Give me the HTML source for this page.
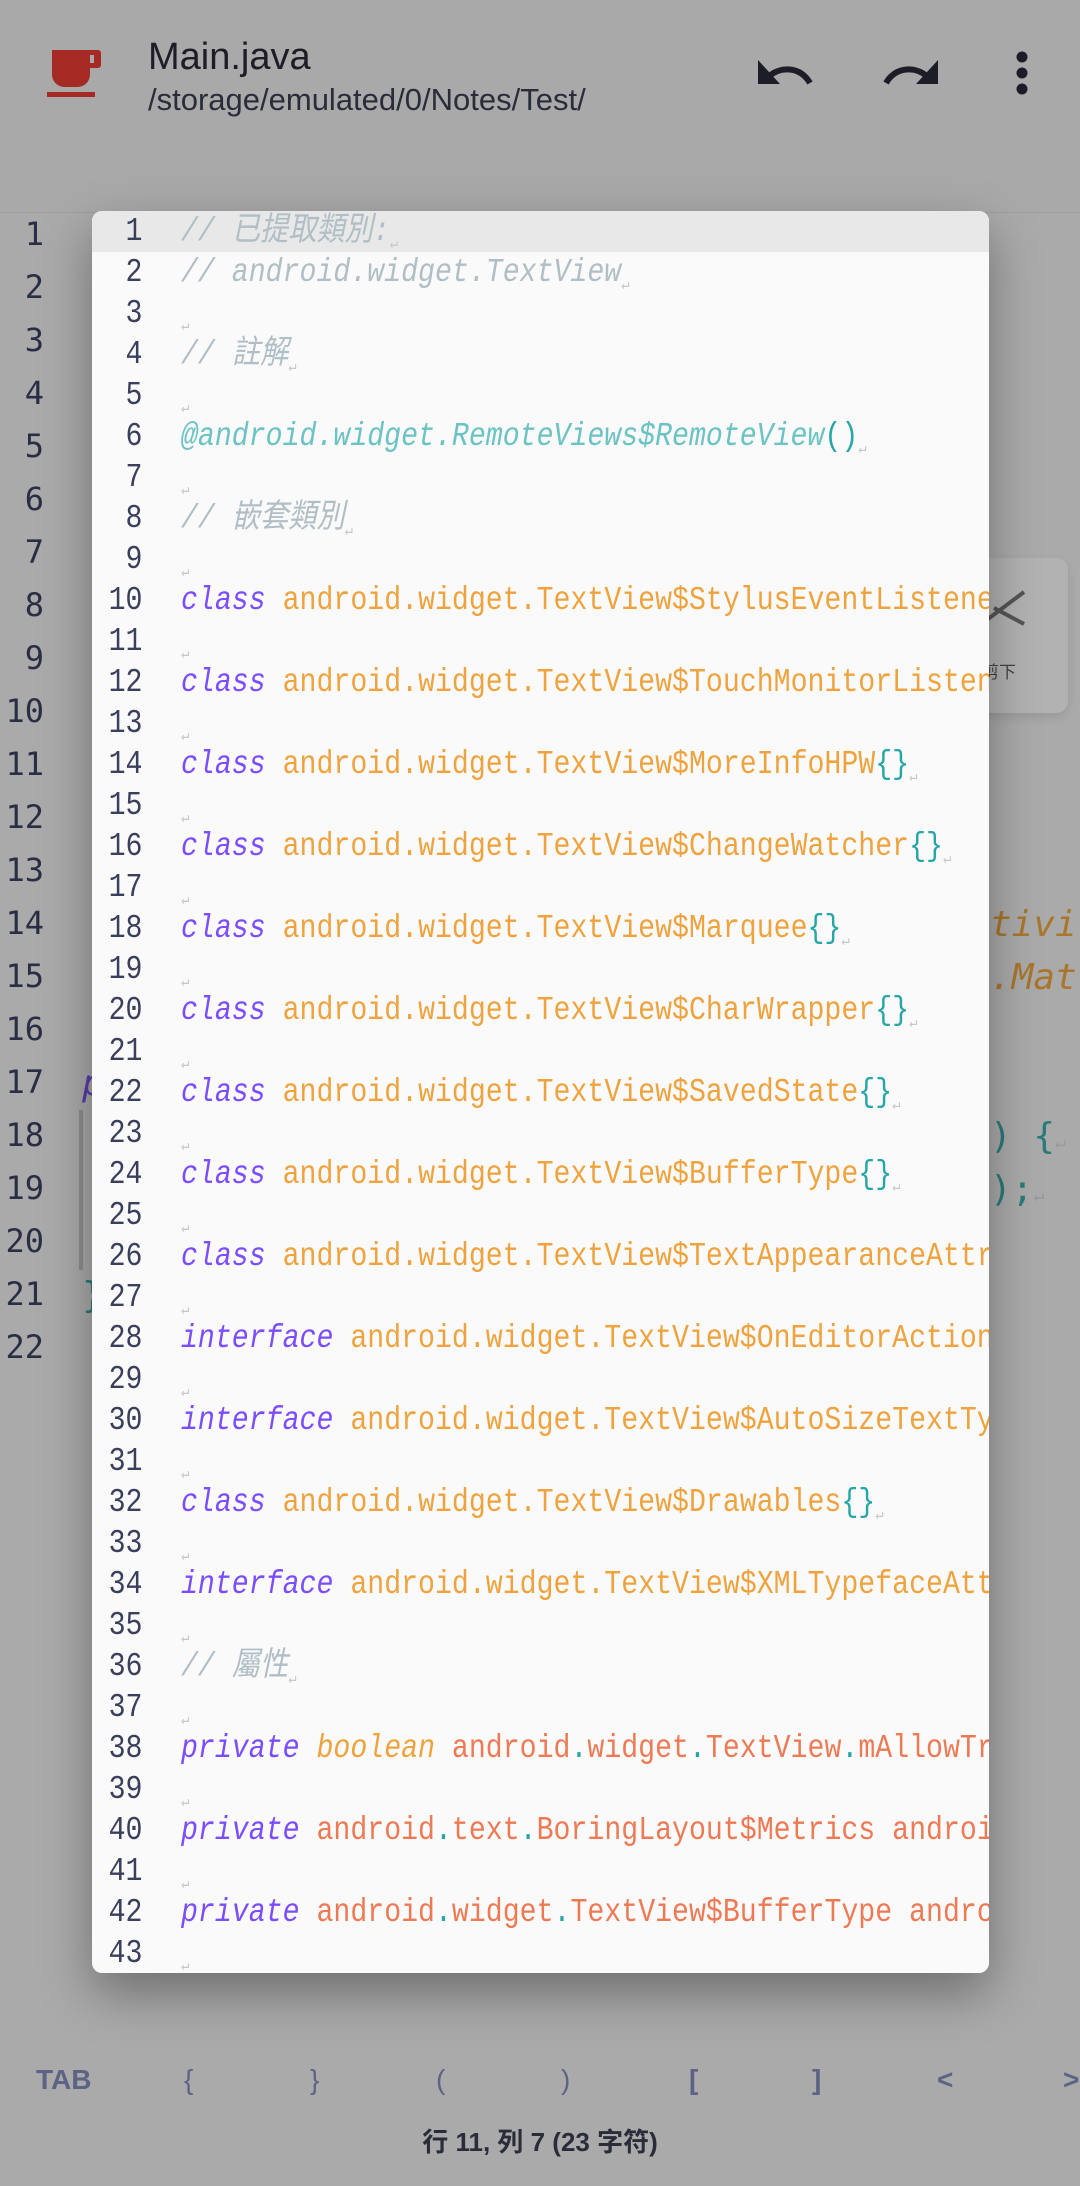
<!DOCTYPE html>
<html><head><meta charset="utf-8">
<style>
*{margin:0;padding:0;box-sizing:border-box}
html,body{width:1080px;height:2186px;overflow:hidden;background:#aaaaaa;font-family:"Liberation Sans","Noto Sans CJK TC",sans-serif}
.top{position:absolute;left:0;top:0;width:1080px;height:213px;background:#a9a9a9;border-bottom:1px solid #9e9e9e}
.title{position:absolute;left:148px;top:36px;font-size:38px;color:#1c1d26}
.sub{position:absolute;left:148px;top:82px;font-size:31px;color:#2a2c3a}
.bgnum{position:absolute;left:0;width:44px;text-align:right;font-family:"DejaVu Sans Mono",monospace;font-size:32px;color:#2a2e45;line-height:53px}
.bgc{position:absolute;font-family:"DejaVu Sans Mono",monospace;font-size:36px;line-height:53px;white-space:nowrap}
.card{position:absolute;left:960px;top:558px;width:108px;height:155px;background:#b2b2b2;border-radius:12px;box-shadow:0 4px 10px rgba(0,0,0,0.1)}
.dlg{position:absolute;left:92px;top:211px;width:897px;height:1762px;background:#fafafa;border-radius:10px;overflow:hidden;box-shadow:0 20px 50px rgba(0,0,0,0.35)}
.ln{position:absolute;left:0;width:897px;height:41px;line-height:41px;white-space:nowrap;font-family:"Liberation Mono","Noto Sans CJK TC",monospace;font-size:33px}
.ln .n{position:absolute;left:0;width:59px;text-align:right;color:#3a3f5c;transform:scaleX(0.855);transform-origin:left center}
.ln .t{position:absolute;left:89px;transform:scaleX(0.855);transform-origin:left center}
.cm{color:#b0bec5;font-style:italic}
.kw{color:#7c4dff;font-style:italic}
.cl{color:#efa33f}
.br{color:#26a6a6}
.an{color:#6cc3c3;font-style:italic}
.fd{color:#ee7a55}
.dt{color:#26a6a6}
.rt{color:#c8c8c8;font-size:16px;font-style:normal;vertical-align:-8px}
.sym{position:absolute;top:2064px;font-size:28px;color:#5d6384;font-weight:bold;font-family:"Liberation Sans",sans-serif}
.stat{position:absolute;top:2122px;left:0;width:1080px;text-align:center;font-size:26px;font-weight:bold;color:#2a2c3a}
</style></head><body>
<div class="top">
<svg style="position:absolute;left:44px;top:48px" width="60" height="52" viewBox="0 0 60 52"><path d="M8 2h38v24c0 8-6 13-13 13h-12c-7 0-13-5-13-13z" fill="#a52a24"/><path d="M44 2h10a3 3 0 0 1 3 3v12a3 3 0 0 1-3 3h-10v-5h6v-8h-6z" fill="#a52a24"/><rect x="3" y="44" width="48" height="5" fill="#a52a24"/></svg>
<div class="title">Main.java</div>
<div class="sub">/storage/emulated/0/Notes/Test/</div>
<svg style="position:absolute;left:756px;top:56px" width="60" height="32" viewBox="0 0 60 32"><path d="M2 4 L2 28 L24 28 Z" fill="#1c1d26"/><path d="M12 21 C24 10 44 10 54 27" fill="none" stroke="#1c1d26" stroke-width="6"/></svg>
<svg style="position:absolute;left:882px;top:56px" width="60" height="32" viewBox="0 0 60 32"><path d="M56 4 L56 28 L34 28 Z" fill="#1c1d26"/><path d="M46 21 C34 10 14 10 4 27" fill="none" stroke="#1c1d26" stroke-width="6"/></svg>
<svg style="position:absolute;left:1012px;top:50px" width="20" height="48" viewBox="0 0 20 48"><circle cx="10" cy="7" r="5.5" fill="#1c1d26"/><circle cx="10" cy="23" r="5.5" fill="#1c1d26"/><circle cx="10" cy="39" r="5.5" fill="#1c1d26"/></svg>
</div>

<div class="bgnum" style="top:208px">1<br>2<br>3<br>4<br>5<br>6<br>7<br>8<br>9<br>10<br>11<br>12<br>13<br>14<br>15<br>16<br>17<br>18<br>19<br>20<br>21<br>22</div>
<div style="position:absolute;left:79px;top:1110px;width:4px;height:160px;background:#8e8e8e"></div>
<div class="bgc" style="left:990px;top:898px;color:#a8762c;font-style:italic">tivi</div>
<div class="bgc" style="left:990px;top:951px;color:#a8762c;font-style:italic">.Mat</div>
<div class="bgc" style="left:990px;top:1110px;color:#2a7a7a">) {<span style="color:#999;font-size:18px">↵</span></div>
<div class="bgc" style="left:990px;top:1163px;color:#2a7a7a">);<span style="color:#999;font-size:18px">↵</span></div>
<div class="bgc" style="left:82px;top:1057px;color:#5a3ca8;font-style:italic">p</div>
<div class="bgc" style="left:82px;top:1269px;color:#2a7a7a">}</div>

<div class="card">
<svg style="position:absolute;left:20px;top:30px" width="46" height="40" viewBox="0 0 46 40"><path d="M4 34 L44 4 M14 20 L44 36" stroke="#555" stroke-width="4" fill="none"/></svg>
<div style="position:absolute;left:22px;top:100px;font-size:17px;color:#444">剪下</div>
</div>

<div class="dlg">
<div style="position:absolute;left:0;top:0;width:897px;height:41px;background:#e8e8e8"></div>
<div class="ln" style="top:0"><span class="n">1</span><span class="t cm">// 已提取類別:<span class="rt">↵</span></span></div>
<div class="ln" style="top:41px"><span class="n">2</span><span class="t cm">// android.widget.TextView<span class="rt">↵</span></span></div>
<div class="ln" style="top:82px"><span class="n">3</span><span class="t"><span class="rt">↵</span></span></div>
<div class="ln" style="top:123px"><span class="n">4</span><span class="t cm">// 註解<span class="rt">↵</span></span></div>
<div class="ln" style="top:164px"><span class="n">5</span><span class="t"><span class="rt">↵</span></span></div>
<div class="ln" style="top:205px"><span class="n">6</span><span class="t"><span class="an">@android.widget.RemoteViews$RemoteView</span><span class="br">()</span><span class="rt">↵</span></span></div>
<div class="ln" style="top:246px"><span class="n">7</span><span class="t"><span class="rt">↵</span></span></div>
<div class="ln" style="top:287px"><span class="n">8</span><span class="t cm">// 嵌套類別<span class="rt">↵</span></span></div>
<div class="ln" style="top:328px"><span class="n">9</span><span class="t"><span class="rt">↵</span></span></div>
<div class="ln" style="top:369px"><span class="n">10</span><span class="t"><span class="kw">class</span> <span class="cl">android.widget.TextView$StylusEventListener</span><span class="br">{}</span></span></div>
<div class="ln" style="top:410px"><span class="n">11</span><span class="t"><span class="rt">↵</span></span></div>
<div class="ln" style="top:451px"><span class="n">12</span><span class="t"><span class="kw">class</span> <span class="cl">android.widget.TextView$TouchMonitorListener</span><span class="br">{}</span></span></div>
<div class="ln" style="top:492px"><span class="n">13</span><span class="t"><span class="rt">↵</span></span></div>
<div class="ln" style="top:533px"><span class="n">14</span><span class="t"><span class="kw">class</span> <span class="cl">android.widget.TextView$MoreInfoHPW</span><span class="br">{}</span><span class="rt">↵</span></span></div>
<div class="ln" style="top:574px"><span class="n">15</span><span class="t"><span class="rt">↵</span></span></div>
<div class="ln" style="top:615px"><span class="n">16</span><span class="t"><span class="kw">class</span> <span class="cl">android.widget.TextView$ChangeWatcher</span><span class="br">{}</span><span class="rt">↵</span></span></div>
<div class="ln" style="top:656px"><span class="n">17</span><span class="t"><span class="rt">↵</span></span></div>
<div class="ln" style="top:697px"><span class="n">18</span><span class="t"><span class="kw">class</span> <span class="cl">android.widget.TextView$Marquee</span><span class="br">{}</span><span class="rt">↵</span></span></div>
<div class="ln" style="top:738px"><span class="n">19</span><span class="t"><span class="rt">↵</span></span></div>
<div class="ln" style="top:779px"><span class="n">20</span><span class="t"><span class="kw">class</span> <span class="cl">android.widget.TextView$CharWrapper</span><span class="br">{}</span><span class="rt">↵</span></span></div>
<div class="ln" style="top:820px"><span class="n">21</span><span class="t"><span class="rt">↵</span></span></div>
<div class="ln" style="top:861px"><span class="n">22</span><span class="t"><span class="kw">class</span> <span class="cl">android.widget.TextView$SavedState</span><span class="br">{}</span><span class="rt">↵</span></span></div>
<div class="ln" style="top:902px"><span class="n">23</span><span class="t"><span class="rt">↵</span></span></div>
<div class="ln" style="top:943px"><span class="n">24</span><span class="t"><span class="kw">class</span> <span class="cl">android.widget.TextView$BufferType</span><span class="br">{}</span><span class="rt">↵</span></span></div>
<div class="ln" style="top:984px"><span class="n">25</span><span class="t"><span class="rt">↵</span></span></div>
<div class="ln" style="top:1025px"><span class="n">26</span><span class="t"><span class="kw">class</span> <span class="cl">android.widget.TextView$TextAppearanceAttributes</span></span></div>
<div class="ln" style="top:1066px"><span class="n">27</span><span class="t"><span class="rt">↵</span></span></div>
<div class="ln" style="top:1107px"><span class="n">28</span><span class="t"><span class="kw">interface</span> <span class="cl">android.widget.TextView$OnEditorActionListener</span></span></div>
<div class="ln" style="top:1148px"><span class="n">29</span><span class="t"><span class="rt">↵</span></span></div>
<div class="ln" style="top:1189px"><span class="n">30</span><span class="t"><span class="kw">interface</span> <span class="cl">android.widget.TextView$AutoSizeTextType</span></span></div>
<div class="ln" style="top:1230px"><span class="n">31</span><span class="t"><span class="rt">↵</span></span></div>
<div class="ln" style="top:1271px"><span class="n">32</span><span class="t"><span class="kw">class</span> <span class="cl">android.widget.TextView$Drawables</span><span class="br">{}</span><span class="rt">↵</span></span></div>
<div class="ln" style="top:1312px"><span class="n">33</span><span class="t"><span class="rt">↵</span></span></div>
<div class="ln" style="top:1353px"><span class="n">34</span><span class="t"><span class="kw">interface</span> <span class="cl">android.widget.TextView$XMLTypefaceAttr</span></span></div>
<div class="ln" style="top:1394px"><span class="n">35</span><span class="t"><span class="rt">↵</span></span></div>
<div class="ln" style="top:1435px"><span class="n">36</span><span class="t cm">// 屬性<span class="rt">↵</span></span></div>
<div class="ln" style="top:1476px"><span class="n">37</span><span class="t"><span class="rt">↵</span></span></div>
<div class="ln" style="top:1517px"><span class="n">38</span><span class="t"><span class="kw">private</span> <span class="cl" style="font-style:italic">boolean</span> <span class="fd">android<span class="dt">.</span>widget<span class="dt">.</span>TextView<span class="dt">.</span>mAllowTransformationLengthChange</span></span></div>
<div class="ln" style="top:1558px"><span class="n">39</span><span class="t"><span class="rt">↵</span></span></div>
<div class="ln" style="top:1599px"><span class="n">40</span><span class="t"><span class="kw">private</span> <span class="fd">android<span class="dt">.</span>text<span class="dt">.</span>BoringLayout$Metrics android.widget</span></span></div>
<div class="ln" style="top:1640px"><span class="n">41</span><span class="t"><span class="rt">↵</span></span></div>
<div class="ln" style="top:1681px"><span class="n">42</span><span class="t"><span class="kw">private</span> <span class="fd">android<span class="dt">.</span>widget<span class="dt">.</span>TextView$BufferType android.widget</span></span></div>
<div class="ln" style="top:1722px"><span class="n">43</span><span class="t"><span class="rt">↵</span></span></div>
</div>

<div class="sym" style="left:36px">TAB</div>
<div class="sym" style="left:184px;font-weight:normal">{</div>
<div class="sym" style="left:310px;font-weight:normal">}</div>
<div class="sym" style="left:436px;font-weight:normal">(</div>
<div class="sym" style="left:561px;font-weight:normal">)</div>
<div class="sym" style="left:689px">[</div>
<div class="sym" style="left:812px">]</div>
<div class="sym" style="left:937px">&lt;</div>
<div class="sym" style="left:1063px">&gt;</div>
<div class="stat">行 11, 列 7 (23 字符)</div>
</body></html>
